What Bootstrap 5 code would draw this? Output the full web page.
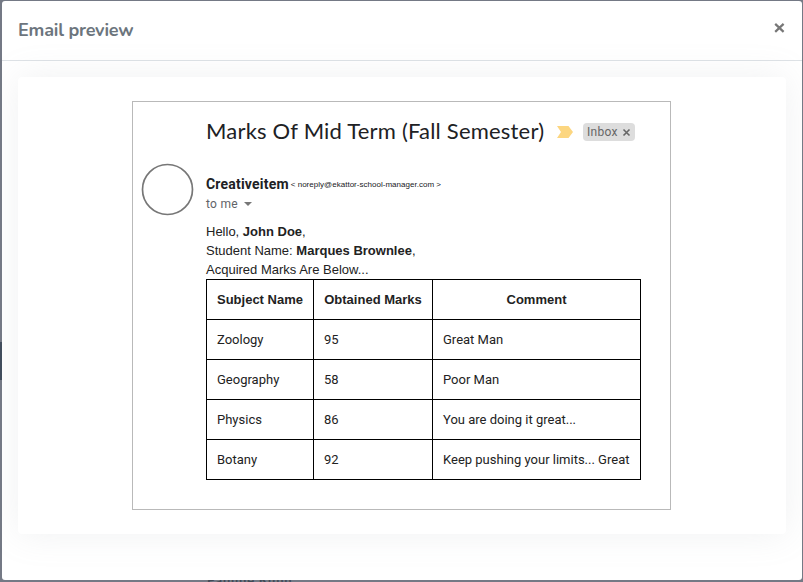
<!DOCTYPE html>
<html lang="en">
<head>
<meta charset="utf-8">
<meta name="viewport" content="width=device-width, initial-scale=1">
<title>Email preview</title>
<link href="https://cdn.jsdelivr.net/npm/bootstrap@5.3.0/dist/css/bootstrap.min.css" rel="stylesheet">
<style>
html,body{height:100%}
body{background:#747985;overflow:hidden;font-family:Roboto,sans-serif;color:#202124;padding:1px 1px 2px 2px}
.page-behind{position:absolute;color:#424b56;font:700 13px/16px Lato,sans-serif;left:207px;top:572px;letter-spacing:.75px;white-space:nowrap}
.side-tab{position:absolute;left:0;top:342px;width:2px;height:38px;background:#414c5c}
.preview-modal{height:579px;border:0;border-radius:3px;background:#fff;color:#202124}
.preview-head{height:60px;padding:0 16px 5px 16px;border-bottom:1px solid #dee2e6;border-radius:0}
.preview-title{font:700 18px/28px Nunito,Lato,sans-serif;color:#6c757d;letter-spacing:-.2px;padding-top:3px}
.preview-body{padding:16px 16px 45px}
.sheet{height:457px;border:0;border-radius:4px;background:#fff;box-shadow:0 0 35px 0 rgba(154,161,171,.15);padding:24px 115px 24px 114px}
.mail{height:409px;border:1px solid #b9b9b9;padding:0 9px}
.avatar-col{width:64px;padding-top:61px}
.avatar-col svg{margin-left:-1px}
.subject{height:61px}
.subject-text{font:400 22px/28px "Google Sans",Lato,sans-serif;color:#202124;white-space:nowrap;width:351px;letter-spacing:.2px;padding-bottom:3px}
.subject .chevron{margin-bottom:1px}
.tag{width:52px;height:18px;margin:0 0 1px 10px;background:#ddd;border-radius:4px;color:#666;font-size:12px;letter-spacing:.3px;line-height:18px;padding-left:4px}
.from-row{height:31px;padding-top:12px}
.sender{font:700 14px/18px Roboto,sans-serif;letter-spacing:.2px;padding-bottom:1px}
.address{font:400 8px/18px "Liberation Sans",sans-serif;white-space:nowrap;margin-left:2px;letter-spacing:.02px}
.to-me{font-size:12px;line-height:18px;letter-spacing:.3px;color:#5f6368;margin-top:1px}
.to-me svg{margin-left:6px}
.message{font:400 13px/19px "Liberation Sans",sans-serif;color:#222;margin-top:9px}
.marks{width:435px;border-collapse:collapse;table-layout:fixed;font-size:13px;line-height:19px;color:#222}
.marks th,.marks td{border:1px solid #000;padding:0 10px;height:40px;white-space:nowrap}
.marks th{font-family:"Liberation Sans",sans-serif;text-align:center}
.marks td{font-family:Roboto,sans-serif}
</style>
</head>
<body>
<div class="side-tab"></div>
<div class="page-behind">Pauline Kunn</div>
<div class="preview-modal position-relative">
  <div class="preview-head d-flex align-items-center justify-content-between">
    <h4 class="preview-title mb-0">Email preview</h4>
    <svg width="13" height="12" viewBox="0 0 13 12" aria-label="Close"><path d="M2.200 1.900l8.400 8M10.600 1.900l-8.400 8" stroke="#777" stroke-width="2.200" fill="none"/></svg>
  </div>
  <div class="preview-body">
    <div class="sheet">
      <div class="mail d-flex">
        <div class="avatar-col flex-shrink-0"><svg class="d-block" width="53" height="53"><circle cx="26.500" cy="26.500" r="25" fill="#fff" stroke="#777" stroke-width="1.700"/></svg></div>
        <div class="flex-grow-1">
          <div class="subject d-flex align-items-center">
            <span class="subject-text">Marks Of Mid Term (Fall Semester)</span>
            <svg class="chevron flex-shrink-0" width="16" height="12" viewBox="0 0 16 12"><path d="M0 0h11.5L16 6l-4.500 6H0l4-6z" fill="#fcd680"/></svg>
            <span class="tag d-flex align-items-center">Inbox<svg class="ms-1" width="9" height="9" viewBox="0 0 9 9"><path d="M1.500 1.500l6 6M7.500 1.500l-6 6" stroke="#666" stroke-width="1.600"/></svg></span>
          </div>
          <div class="from-row d-flex align-items-center"><span class="sender">Creativeitem</span><span class="address">&lt; noreply@ekattor-school-manager.com &gt;</span></div>
          <div class="to-me d-flex align-items-center">to me<svg width="8" height="4"><path d="M0 0h8L4 4z" fill="#777"/></svg></div>
          <div class="message">
            <div>Hello, <b>John Doe</b>,</div>
            <div>Student Name: <b>Marques Brownlee</b>,</div>
            <div>Acquired Marks Are Below...</div>
          </div>
          <table class="marks">
            <colgroup><col style="width:107px"><col style="width:119px"><col></colgroup>
            <thead><tr><th>Subject Name</th><th>Obtained Marks</th><th>Comment</th></tr></thead>
            <tbody>
              <tr><td>Zoology</td><td>95</td><td>Great Man</td></tr>
              <tr><td>Geography</td><td>58</td><td>Poor Man</td></tr>
              <tr><td>Physics</td><td>86</td><td>You are doing it great...</td></tr>
              <tr><td>Botany</td><td>92</td><td>Keep pushing your limits... Great</td></tr>
            </tbody>
          </table>
        </div>
      </div>
    </div>
  </div>
</div>
<script src="https://cdn.jsdelivr.net/npm/bootstrap@5.3.0/dist/js/bootstrap.bundle.min.js"></script>
</body>
</html>
